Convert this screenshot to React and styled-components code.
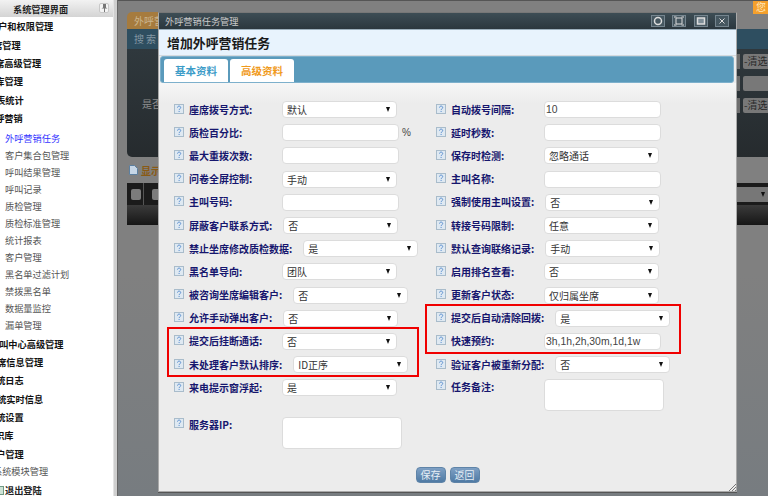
import styled, { createGlobalStyle } from "styled-components";

const CJK = `"Noto Sans CJK SC", "Liberation Sans", sans-serif`;

const topMenu = [
  { text: "用户和权限管理", shift: -11 },
  { text: "坐席管理", shift: -16 },
  { text: "坐席高级管理", shift: -14 },
  { text: "数据库管理", shift: -23 },
  { text: "报表统计", shift: -13 },
  { text: "外呼营销", shift: -14 },
];

const subMenu = [
  "外呼营销任务",
  "客户集合包管理",
  "呼叫结果管理",
  "呼叫记录",
  "质检管理",
  "质检标准管理",
  "统计报表",
  "客户管理",
  "黑名单过滤计划",
  "禁拨黑名单",
  "数据量监控",
  "漏单管理",
];

const bottomMenu = [
  { text: "呼叫中心高级管理", shift: -10 },
  { text: "坐席信息管理", shift: -12 },
  { text: "系统日志", shift: -13 },
  { text: "系统实时信息", shift: -12 },
  { text: "系统设置", shift: -13 },
  { text: "知识库", shift: -14 },
  { text: "租户管理", shift: -13 },
];

function HelpIcon() {
  return (
    <HelpSvg viewBox="0 0 10 10">
      <rect x="0.5" y="0.5" width="9" height="9" fill="#dfe9f2" stroke="#a9bccb" />
      <path d="M3.5 3.6c0-2 3.2-2 3.2 0 0 1.2-1.6 1.2-1.6 2.5" fill="none" stroke="#5b8fd0" strokeWidth="1" />
      <rect x="4.6" y="7" width="1" height="1" fill="#5b8fd0" />
    </HelpSvg>
  );
}

function Field({ label, children, tall }) {
  return (
    <Row $tall={tall}>
      <HelpIcon />
      <Label>{label}:</Label>
      {children}
    </Row>
  );
}

function Select({ value }) {
  return (
    <SelectBox>
      {value}
      <Arrow />
    </SelectBox>
  );
}

function Filter({ text }) {
  return (
    <FilterRow>
      <FilterCell />
      <FilterButton>{text}</FilterButton>
    </FilterRow>
  );
}

function WindowIcon({ children }) {
  return (
    <WindowButton>
      <svg width="12" height="10" viewBox="0 0 12 10">
        {children}
      </svg>
    </WindowButton>
  );
}

export default function App() {
  return (
    <Page>
      <GlobalStyle />
      <Sidebar>
        <SideHeader>
          系统管理界面
          <PinButton>
            <svg width="7" height="8" viewBox="0 0 7 8">
              <path d="M2 0h3v3.5l1.5 1H4V8H3V4.500H.5L2 3.5z" fill="#777" />
            </svg>
          </PinButton>
        </SideHeader>
        {topMenu.map((item) => (
          <MenuRow key={item.text}>
            <MenuText $shift={item.shift}>{item.text}</MenuText>
          </MenuRow>
        ))}
        <SubList>
          {subMenu.map((text, i) => (
            <SubRow key={text} $active={i === 0}>
              {text}
            </SubRow>
          ))}
        </SubList>
        {bottomMenu.map((item) => (
          <MenuRow key={item.text}>
            <MenuText $shift={item.shift}>{item.text}</MenuText>
          </MenuRow>
        ))}
        <ModuleRow>系统模块管理</ModuleRow>
        <LogoutRow>
          <svg width="4" height="9" viewBox="0 0 4 9">
            <rect x="-3" y="0.5" width="6.5" height="8" fill="#cfe3d6" stroke="#6f9a86" />
          </svg>
          退出登陆
        </LogoutRow>
      </Sidebar>
      <Splitter />
      <Main>
        <BackPanel>
          <OrangeTab>外呼营销任务</OrangeTab>
          <SearchBar>搜索</SearchBar>
          <BackBody>
            <BackLabel>是否</BackLabel>
            <FilterColumn>
              <Filter text="-清选" />
              <Filter text="" />
              <Filter text="-清选" />
            </FilterColumn>
          </BackBody>
        </BackPanel>
        <ShowLine>
          <svg width="9" height="10" viewBox="0 0 9 10">
            <path d="M.5.5h5l3 3v6h-8z" fill="#c6d6e6" stroke="#5c7f9f" />
          </svg>
          显示
        </ShowLine>
        <BackTable>
          <TableTools>
            <ToolButton />
            <ToolDivider />
            <ToolButton />
            <TableSelect>
              <Arrow />
            </TableSelect>
          </TableTools>
          <TableFoot />
        </BackTable>

        <Notice>您</Notice>

        <Modal>
          <TitleBar>
            外呼营销任务管理
            <WindowIcons>
              <WindowIcon>
                <circle cx="6" cy="5" r="3.5" fill="none" stroke="#ddd" strokeWidth="1.5" />
              </WindowIcon>
              <WindowIcon>
                <path d="M1 1h2.5M8.5 1H11M1 9h2.5M8.5 9H11M3 2h6v6H3z" fill="none" stroke="#ddd" />
              </WindowIcon>
              <WindowIcon>
                <rect x="2.5" y="2" width="7" height="6" fill="#7d8d97" stroke="#ddd" strokeWidth="1.5" />
              </WindowIcon>
              <WindowIcon>
                <path d="M3.5 2.5l5 5M8.5 2.5l-5 5" stroke="#ddd" />
              </WindowIcon>
            </WindowIcons>
          </TitleBar>
          <Heading>增加外呼营销任务</Heading>
          <TabBar>
            <Tab $color="#3c9cc8">基本资料</Tab>
            <Tab $color="#f09a1c">高级资料</Tab>
          </TabBar>
          <FormGrid>
            <Column>
              <Field label="座席拨号方式"><Select value="默认" /></Field>
              <Field label="质检百分比">
                <TextInput />
                <Percent>%</Percent>
              </Field>
              <Field label="最大重拨次数"><TextInput /></Field>
              <Field label="问卷全屏控制"><Select value="手动" /></Field>
              <Field label="主叫号码"><TextInput /></Field>
              <Field label="屏蔽客户联系方式"><Select value="否" /></Field>
              <Field label="禁止坐席修改质检数据"><Select value="是" /></Field>
              <Field label="黑名单导向"><Select value="团队" /></Field>
              <Field label="被咨询坐席编辑客户"><Select value="否" /></Field>
              <Field label="允许手动弹出客户"><Select value="否" /></Field>
              <Marked $left={-7} $width={252}>
                <Field label="提交后挂断通话"><Select value="否" /></Field>
                <Field label="未处理客户默认排序"><Select value="ID正序" /></Field>
              </Marked>
              <Field label="来电提示窗浮起"><Select value="是" /></Field>
              <ServerGap />
              <Field label="服务器IP" tall><TextArea /></Field>
            </Column>
            <Column>
              <Field label="自动拨号间隔"><TextInput defaultValue="10" /></Field>
              <Field label="延时秒数"><TextInput /></Field>
              <Field label="保存时检测"><Select value="忽略通话" /></Field>
              <Field label="主叫名称"><TextInput /></Field>
              <Field label="强制使用主叫设置"><Select value="否" /></Field>
              <Field label="转接号码限制"><Select value="任意" /></Field>
              <Field label="默认查询联络记录"><Select value="手动" /></Field>
              <Field label="启用排名查看"><Select value="否" /></Field>
              <Field label="更新客户状态"><Select value="仅归属坐席" /></Field>
              <Marked $left={-11} $width={256}>
                <Field label="提交后自动清除回拨"><Select value="是" /></Field>
                <Field label="快速预约"><TextInput defaultValue="3h,1h,2h,30m,1d,1w" /></Field>
              </Marked>
              <Field label="验证客户被重新分配"><Select value="否" /></Field>
              <NoteGap />
              <Field label="任务备注" tall><TextArea /></Field>
            </Column>
          </FormGrid>
          <Footer>
            <ActionButton>保存</ActionButton>
            <ActionButton>返回</ActionButton>
          </Footer>
          <Grip width="7" height="7" viewBox="0 0 7 7">
            <path d="M0 7l7-7M3 7l4-4M6 7l1-1" stroke="#777" />
          </Grip>
        </Modal>
      </Main>
    </Page>
  );
}

const GlobalStyle = createGlobalStyle`
  html, body {
    margin: 0;
    padding: 0;
    background: #808080;
    font-family: ${CJK};
  }
`;

const Page = styled.div`
  display: flex;
  width: 768px;
  height: 496px;
  overflow: hidden;
`;

const Sidebar = styled.aside`
  flex: 0 0 113px;
  height: 496px;
  background: #fff;
  overflow: hidden;
  font-size: 9.2px;
  line-height: 12px;
`;

const SideHeader = styled.div`
  display: flex;
  align-items: center;
  height: 17px;
  padding-left: 13px;
  box-sizing: border-box;
  position: relative;
  background: linear-gradient(#f2f2f2, #d4d4d4);
  font-weight: 700;
  color: #222;
`;

const PinButton = styled.span`
  position: absolute;
  left: 99px;
  top: 3px;
  width: 10px;
  height: 10px;
  display: flex;
  align-items: center;
  justify-content: center;
  background: #f4f4f4;
  border: 1px solid #c8c8c8;
  box-sizing: border-box;
  border-radius: 2px;
`;

const MenuRow = styled.div`
  display: flex;
  align-items: center;
  height: 18.4px;
  font-weight: 700;
  color: #111;
  white-space: nowrap;
`;

const MenuText = styled.span`
  margin-left: ${({ $shift }) => $shift}px;
`;

const SubList = styled.div`
  padding: 2px 0 1px;
`;

const SubRow = styled.div`
  display: flex;
  align-items: center;
  height: 17px;
  padding-left: 5px;
  color: ${({ $active }) => ($active ? "#3333ff" : "#555")};
  white-space: nowrap;
`;

const ModuleRow = styled.div`
  display: flex;
  align-items: center;
  height: 17px;
  margin-top: -1px;
  margin-left: -7px;
  color: #555;
  white-space: nowrap;
`;

const LogoutRow = styled.div`
  display: flex;
  align-items: center;
  gap: 1px;
  height: 18px;
  margin-top: 2px;
  font-weight: 700;
  color: #222;
`;

const Splitter = styled.div`
  flex: 0 0 5px;
  box-sizing: border-box;
  background: #cfcfcf;
  border-left: 1px solid #e4e4e4;
  border-right: 1px solid #666;
`;

const Main = styled.main`
  flex: 1;
  position: relative;
  display: flex;
  flex-direction: column;
  padding: 11px 0 0 9px;
  border-top: 1px solid #555;
  background: linear-gradient(#808080, #808080 55%, #777c80);
  overflow: hidden;
`;

const BackPanel = styled.section`
  display: flex;
  flex-direction: column;
  width: 641px;
  height: 145px;
  flex: none;
  border-radius: 5px 0 0 5px;
  overflow: hidden;
  font-size: 10px;
  color: #8d8d8d;
`;

const OrangeTab = styled.div`
  width: 24px;
  height: 17px;
  line-height: 17px;
  padding-left: 7px;
  background: #a67b3e;
  color: #cbb58e;
  white-space: nowrap;
  overflow: hidden;
`;

const SearchBar = styled.div`
  height: 20px;
  line-height: 20px;
  padding-left: 7px;
  letter-spacing: 2px;
  background: #2e4e60;
  color: #8296a2;
`;

const BackBody = styled.div`
  flex: 1;
  display: flex;
  justify-content: space-between;
  align-items: center;
  padding-left: 15px;
  background: linear-gradient(#2f383d, #262b2e);
`;

const BackLabel = styled.span`
  width: 16px;
  overflow: hidden;
  white-space: nowrap;
`;

const FilterColumn = styled.div`
  align-self: flex-start;
  display: flex;
  flex-direction: column;
  gap: 7px;
  padding-top: 5px;
`;

const FilterRow = styled.div`
  display: flex;
  gap: 3px;
`;

const FilterCell = styled.span`
  width: 4px;
  height: 15px;
  background: #6d6d6d;
`;

const FilterButton = styled.span`
  width: 24px;
  height: 15px;
  line-height: 14px;
  padding-left: 1px;
  font-size: 10px;
  overflow: hidden;
  white-space: nowrap;
  border-radius: 2px 0 0 2px;
  background: #787878;
  color: #2a2a2a;
`;

const ShowLine = styled.div`
  display: flex;
  align-items: center;
  gap: 3px;
  height: 26px;
  padding-left: 2px;
  font-size: 10px;
  font-weight: 700;
  color: #8a5a14;
`;

const BackTable = styled.section`
  width: 641px;
  flex: none;
`;

const TableTools = styled.div`
  display: flex;
  align-items: center;
  height: 22px;
  padding-left: 4px;
  background: #1b1b1b;
`;

const ToolButton = styled.span`
  width: 10px;
  height: 11px;
  border-radius: 2px;
  background: #7c7c7c;
`;

const ToolDivider = styled.span`
  width: 1px;
  height: 22px;
  margin: 0 8px 0 2px;
  background: #555;
`;

const TableSelect = styled.span`
  display: flex;
  align-items: center;
  justify-content: flex-end;
  width: 31px;
  height: 15px;
  margin-left: auto;
  padding-right: 3px;
  box-sizing: border-box;
  background: #777;
`;

const TableFoot = styled.div`
  height: 20px;
  background: linear-gradient(#3b3b3b, #161616);
`;

const Notice = styled.div`
  position: absolute;
  right: 0;
  top: 0;
  width: 15px;
  height: 13px;
  padding-left: 3px;
  box-sizing: border-box;
  background: #f5a02c;
  color: #ffe6bb;
  font-size: 10px;
  line-height: 12px;
  overflow: hidden;
`;

const Modal = styled.div`
  position: absolute;
  left: 40px;
  top: 11px;
  width: 579px;
  height: 480px;
  box-sizing: border-box;
  display: flex;
  flex-direction: column;
  background: #ececec;
  border: 1px solid #a9a9a9;
  border-top-color: #777;
  box-shadow: 0 1px 0 #555;
`;

const TitleBar = styled.div`
  display: flex;
  align-items: center;
  justify-content: space-between;
  height: 16px;
  flex: none;
  padding: 0 7px 0 6px;
  background: linear-gradient(#3d4d55, #2b373e);
  border-bottom: 1px solid #9db0bd;
  font-size: 9.2px;
  color: #c9c9c9;
`;

const WindowIcons = styled.div`
  display: flex;
  gap: 7.5px;
`;

const WindowButton = styled.span`
  display: flex;
  align-items: center;
  justify-content: center;
  width: 14px;
  height: 12px;
  box-sizing: border-box;
  border: 1px solid #75858f;
  background: #465760;
`;

const Heading = styled.h1`
  margin: 0;
  height: 26px;
  flex: none;
  box-sizing: border-box;
  padding: 4px 0 0 8px;
  background: #e8f3fd;
  border-bottom: 1px solid #d4dadf;
  font-size: 12.9px;
  line-height: 18px;
  font-weight: 700;
  color: #1a1a1a;
`;

const TabBar = styled.div`
  display: flex;
  align-items: flex-end;
  gap: 2px;
  height: 27px;
  flex: none;
  box-sizing: border-box;
  margin: 0 2px 0 1px;
  padding-left: 3px;
  background: #5a9abb;
  border: 1px solid #7db0cc;
  border-radius: 3px;
`;

const Tab = styled.span`
  width: 64px;
  height: 23px;
  line-height: 23px;
  text-align: center;
  background: #fff;
  border-radius: 3px 3px 0 0;
  font-size: 10.5px;
  font-weight: 700;
  color: ${({ $color }) => $color};
`;

const FormGrid = styled.div`
  display: grid;
  grid-template-columns: 262px 1fr;
  padding: 15px 0 0 15px;
  background: linear-gradient(#f6f6f6, #ececec 20px);
`;

const Column = styled.div`
  display: flex;
  flex-direction: column;
`;

const Marked = styled.div`
  position: relative;

  &::after {
    content: "";
    position: absolute;
    left: ${({ $left }) => $left}px;
    top: -3px;
    width: ${({ $width }) => $width}px;
    height: 50px;
    box-sizing: border-box;
    border: 2px solid #f00000;
    pointer-events: none;
  }
`;

const Row = styled.div`
  display: flex;
  align-items: ${({ $tall }) => ($tall ? "flex-start" : "center")};
  height: ${({ $tall }) => ($tall ? "32px" : "23.2px")};
`;

const ServerGap = styled.div`
  height: 18px;
`;

const NoteGap = styled.div`
  height: 3px;
`;

const HelpSvg = styled.svg`
  flex: none;
  width: 10px;
  height: 10px;
  margin: 1px 5px 3px 0;
`;

const Label = styled.label`
  flex: none;
  box-sizing: border-box;
  min-width: 93px;
  padding-right: 11px;
  font-size: 10px;
  font-weight: 700;
  line-height: 16px;
  white-space: nowrap;
  color: #16166e;
`;

const Control = `
  box-sizing: border-box;
  background: #fff;
  border: 1px solid #dcdcdc;
  border-radius: 4px;
  outline: none;
`;

const SelectBox = styled.div`
  ${Control}
  display: flex;
  align-items: center;
  justify-content: space-between;
  flex: none;
  width: 115px;
  height: 17px;
  padding: 0 6px 0 4px;
  font-size: 10px;
  color: #333;
`;

const Arrow = styled.span`
  width: 0;
  height: 0;
  border-left: 2.5px solid transparent;
  border-right: 2.5px solid transparent;
  border-top: 5px solid #111;
`;

const TextInput = styled.input`
  ${Control}
  flex: none;
  width: 117px;
  height: 17px;
  padding: 0 0 0 1px;
  font-family: "Liberation Sans", sans-serif;
  font-size: 10.4px;
  color: #444;
`;

const Percent = styled.span`
  margin-left: 3px;
  font-family: "Liberation Sans", sans-serif;
  font-size: 10px;
  color: #444;
`;

const TextArea = styled.textarea`
  ${Control}
  flex: none;
  width: 120px;
  height: 32px;
  padding: 0;
  resize: none;
`;

const Footer = styled.div`
  display: flex;
  justify-content: center;
  gap: 4px;
  margin-top: auto;
  padding-bottom: 8px;
`;

const ActionButton = styled.button`
  width: 30px;
  height: 16px;
  padding: 0;
  border: 1px solid #5f84a8;
  border-radius: 4px;
  background: linear-gradient(#7ea0c4, #4f7aa4);
  font-family: ${CJK};
  font-size: 10px;
  line-height: 14px;
  color: #e6eef5;
`;

const Grip = styled.svg`
  position: absolute;
  right: 0;
  bottom: 0;
`;
